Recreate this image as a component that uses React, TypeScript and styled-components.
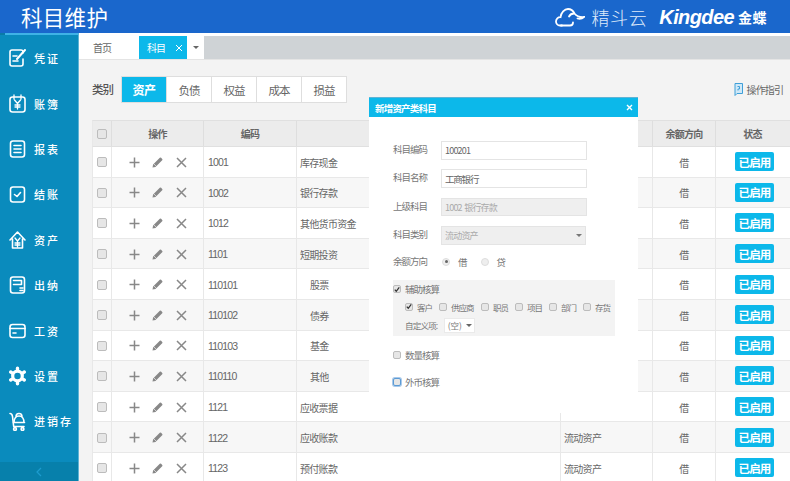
import React from "react";
import styled, { createGlobalStyle } from "styled-components";

const Global = createGlobalStyle`
  html, body { margin: 0; padding: 0; background: #fff; }
  * { box-sizing: border-box; }
  body { font-family: "Noto Sans CJK SC", "Liberation Sans", sans-serif; }
`;
const Page = styled.div`
  position: relative; width: 790px; height: 481px; overflow: hidden;
  display: flex; flex-direction: column;
`;
const Header = styled.header`
  height: 33px; flex: none; background: #1a67cc; color: #fff;
  display: flex; align-items: center; padding: 0 23px 0 21px;
`;
const Title = styled.h1`margin: 0; font-size: 21.5px; font-weight: 400; line-height: 33px; flex: 1; letter-spacing: .3px;`;
const Brand = styled.div`display: flex; align-items: center;`;
const BrandCn = styled.span`font-size: 18px; font-weight: 300; letter-spacing: .6px; margin: 0 12px 0 6px; line-height: 1; color: #dfeafa;`;
const BrandEn = styled.span`font-family: "Liberation Sans", sans-serif; font-size: 20px; font-weight: 700; font-style: italic; line-height: 1; letter-spacing: -.6px;`;
const BrandGold = styled.span`font-size: 14px; font-weight: 700; margin-left: 4px; line-height: 1; letter-spacing: .5px;`;
const Body = styled.div`flex: 1; display: flex; min-height: 0;`;
const Sidebar = styled.nav`
  width: 79px; flex: none; background: #0a8bbd; border-right: 1px solid #5fb3d4;
  display: flex; flex-direction: column; position: relative;
  border-top: 2px solid #3fb2e6;
  &::before { content: ""; position: absolute; left: 0; top: -2px; width: 5px; height: 2px; background: #0a7aa8; }
`;
const NavList = styled.div`flex: 1; display: flex; flex-direction: column; padding-top: 0.5px;`;
const NavItem = styled.div`
  height: 45.4px; flex: none; display: flex; align-items: center; padding-left: 9px; gap: 8px;
  color: #fff; font-size: 11px; letter-spacing: 2px; font-weight: 500; white-space: nowrap;
  svg { width: 17px; height: 20px; flex: none; }
`;
const Collapse = styled.div`
  height: 19px; flex: none; background: #0780ab; color: #1d9ccf; display: flex; align-items: center; justify-content: center;
`;
const Main = styled.main`flex: 1; min-width: 0; background: #f3f3f3; display: flex; flex-direction: column; border-top: 3px solid #fff; overflow: hidden;`;
const TabBar = styled.div`height: 24px; flex: none; background: #cfd3d6; display: flex; border-bottom: 1px solid #e4e4e4;`;
const Tab = styled.div<{ $active?: boolean; $w: number }>`
  width: ${p => p.$w}px; display: flex; align-items: center; font-size: 10px; letter-spacing: -.9px; gap: 10px;
  padding-left: ${p => (p.$active ? 8 : 14)}px;
  background: ${p => (p.$active ? "#0cb8ea" : "#fff")}; color: ${p => (p.$active ? "#fff" : "#666")};
`;
const CaretTab = styled.div`width: 17px; background: #fff; display: flex; align-items: center; justify-content: center;`;
const Caret = styled.span<{ $c?: string }>`
  width: 0; height: 0; border-left: 3px solid transparent; border-right: 3px solid transparent;
  border-top: 3px solid ${p => p.$c || "#666"};
`;
const Toolbar = styled.div`height: 60px; flex: none; display: flex; align-items: flex-start; padding: 16px 7px 0 13px;`;
const CatLabel = styled.span`font-size: 11.5px; letter-spacing: -.9px; font-weight: 500; color: #555; line-height: 26px; width: 29px; white-space: nowrap;`;
const Seg = styled.div`display: flex; height: 27px; border: 1px solid #dedede; background: #fff;`;
const SegBtn = styled.div<{ $active?: boolean }>`
  width: 45px; display: flex; align-items: center; justify-content: center;
  font-size: ${p => (p.$active ? 12 : 11.5)}px; letter-spacing: ${p => (p.$active ? -.5 : -1)}px;
  background: ${p => (p.$active ? "#0cb8ea" : "#fff")}; color: ${p => (p.$active ? "#fff" : "#666")};
  font-weight: ${p => (p.$active ? 600 : 400)};
  border-right: 1px solid #dedede;
  &:last-child { border-right: none; width: 44px; }
`;
const Guide = styled.div`margin-left: auto; margin-top: 7px; display: flex; align-items: center; gap: 4px; font-size: 10px; letter-spacing: -.9px; color: #666; line-height: 13px;`;
const Table = styled.div`margin-left: 13px; display: flex; flex-direction: column; width: 720px;`;
const cols = "19px 92px 93px 264px 92px 63px 97px";
const HeadRow = styled.div`
  display: grid; grid-template-columns: ${cols}; height: 27px; background: #ececec;
  border-top: 1px solid #e0e0e0; border-bottom: 1px solid #e0e0e0; border-left: 1px solid #e8e8e8;
`;
const HeadCell = styled.div`
  display: flex; align-items: center; justify-content: center; font-size: 10px; letter-spacing: -.8px; font-weight: 600; color: #666;
  border-right: 1px solid #dedede;
  &:nth-child(7) { padding-right: 24px; border-right: none; }
`;
const Row = styled.div<{ $odd: boolean }>`
  display: grid; grid-template-columns: ${cols}; height: 30.6px; flex: none;
  background: ${p => (p.$odd ? "#fff" : "#f7f7f7")};
  border-bottom: 1.5px solid #e8e8e8; border-left: 1px solid #e8e8e8;
`;
const Cell = styled.div<{ $center?: boolean; $indent?: boolean }>`
  display: flex; align-items: center; border-right: 1px solid #e8e8e8; color: #666; font-size: 10px; letter-spacing: -.7px; white-space: nowrap;
  justify-content: ${p => (p.$center ? "center" : "flex-start")};
  padding-left: ${p => (p.$center ? 0 : p.$indent ? 13 : 3)}px;
  padding-top: 1px;
`;
const CodeCell = styled(Cell)`font-family: "Liberation Sans", sans-serif; font-size: 10.5px; letter-spacing: -.85px; padding-left: 4px;`;
const OpCell = styled(Cell)`gap: 12.5px; color: #888;`;
const LastCell = styled(Cell)`border-right: none; justify-content: flex-start; padding-left: 19px; padding-top: 0; letter-spacing: 0;`;
const Status = styled.span`
  width: 39px; height: 19px; background: #0cb8ea; color: #fff; border-radius: 2px; font-size: 11.5px; font-weight: 700;
  display: flex; align-items: center; justify-content: center; letter-spacing: -.9px;
`;
const Check = styled.span<{ $size?: number; $focus?: boolean }>`
  width: ${p => p.$size || 10}px; height: ${p => p.$size || 10}px; flex: none; display: inline-flex; align-items: center; justify-content: center;
  background: #e6e6e6; border: 1px solid ${p => (p.$focus ? "#5b9bd5" : "#bcbcbc")}; border-radius: 2px;
  ${p => (p.$focus ? "box-shadow: 0 0 0 1px #a9c9ea;" : "")}
`;
const Dialog = styled.div`
  position: absolute; left: 369px; top: 97px; width: 269px; height: 316px; background: #fff; display: flex; flex-direction: column;
`;
const DlgTitle = styled.div`
  height: 20px; flex: none; background: #0cb8ea; border-top: 1px solid #5fb3d4; color: #fff; font-size: 9.5px; letter-spacing: -.8px; font-weight: 700;
  display: flex; align-items: center; justify-content: space-between; padding: 0 5px 0 6px;
`;
const DlgBody = styled.div`padding: 24px 22px 0 24px; display: flex; flex-direction: column;`;
const Field = styled.div`height: 28.4px; flex: none; display: flex; align-items: flex-start; font-size: 9.5px; letter-spacing: -1px; color: #777;`;
const FieldLabel = styled.span`width: 48px; flex: none; line-height: 17px;`;
const Input = styled.div<{ $off?: boolean; $w?: number; $big?: boolean }>`
  width: ${p => p.$w || 146}px; height: 18.5px; border: 1px solid #e4e4e4; display: flex; align-items: center; padding: 0 3px;
  background: ${p => (p.$off ? "#efefef" : "#fff")}; color: ${p => (p.$off ? "#aaa" : "#666")};
  font-size: ${p => (p.$big ? 9.5 : 9)}px; letter-spacing: ${p => (p.$big ? -1.2 : -.8)}px; justify-content: space-between; white-space: nowrap;
`;
const RadioRow = styled.div`height: 18px; margin-top: -2px; display: flex; align-items: center; font-size: 9.5px; letter-spacing: -1px; color: #777;`;
const Radio = styled.span<{ $on?: boolean }>`
  width: 8px; height: 8px; flex: none; border-radius: 50%; background: #eee; border: 1px solid #ddd; margin: 0 8px 0 1px; display: inline-flex; align-items: center; justify-content: center;
  &::after { content: ""; width: 3px; height: 3px; border-radius: 50%; background: ${p => (p.$on ? "#666" : "transparent")}; }
`;
const RadioText = styled.span`margin-right: 12px; font-size: 9.5px; letter-spacing: 0;`;
const AuxBox = styled.div`background: #f3f3f3; height: 56px; margin-top: 9px; padding-top: 3px; display: flex; flex-direction: column; width: 222px;`;
const CheckLine = styled.label`display: flex; align-items: center; gap: 4px; font-size: 9.5px; letter-spacing: -1px; color: #777; height: 13px; white-space: nowrap;`;
const SubLine = styled.div`display: flex; align-items: center; padding-left: 12px; height: 17px; margin-top: 2.5px; font-size: 8.5px; letter-spacing: -1px; color: #777;`;
const SubItem = styled.label<{ $w: number }>`width: ${p => p.$w}px; flex: none; display: flex; align-items: center; gap: 4px; white-space: nowrap;`;
const CustomLine = styled.div`display: flex; align-items: center; padding-left: 12px; margin-top: 2px; font-size: 8.5px; letter-spacing: -.8px; color: #777; gap: 7px; height: 16px;`;
const MiniSelect = styled.div`width: 31px; height: 15px; background: #fff; border: 1px solid #eaeaea; display: flex; align-items: center; justify-content: center; gap: 4px; font-size: 8.5px; letter-spacing: 0;`;
const AloneLine = styled(CheckLine)<{ $mt: number }>`margin-top: ${p => p.$mt}px;`;

const Ico: React.FC<{ children: React.ReactNode }> = ({ children }) => (
  <svg viewBox="0 0 17 20" fill="none" stroke="#fff" strokeWidth="1.6" strokeLinecap="round" strokeLinejoin="round">{children}</svg>
);
const nav: [string, React.ReactNode][] = [
  ["凭证", <Ico><path d="M14 5V4a2 2 0 0 0-2-2H3a2 2 0 0 0-2 2v12a2 2 0 0 0 2 2h9a2 2 0 0 0 2-2v-5" /><path d="M4 8h4M4 13h5" /><path d="M8 11l8-9" strokeWidth="2" /></Ico>],
  ["账簿", <Ico><rect x="1" y="3" width="15" height="15" rx="2.5" /><path d="M5 1v4M12 1v4M5.5 6l3 3.5 3-3.5M8.5 9.5V15M6 11h5M6 13h5" strokeWidth="1.3" /></Ico>],
  ["报表", <Ico><rect x="1.5" y="2" width="14" height="16" rx="2.5" /><path d="M5 6.5h7M5 10h7M5 13.5h7" /></Ico>],
  ["结账", <Ico><rect x="1.5" y="3" width="14" height="15" rx="2.5" /><path d="M5.5 10.5l2.5 2 3.5-4" /></Ico>],
  ["资产", <Ico><path d="M1 10l7.5-8L16 10M3.5 9v9h10V9" /><path d="M6 8l2.5 3L11 8M8.5 11v6M6 13h5M6 15h5" strokeWidth="1.3" /></Ico>],
  ["出纳", <Ico><rect x="1.5" y="2" width="14" height="16" rx="2.5" /><path d="M4.5 5.5h8v4h-8M11 13h3M11 15.5h3" /></Ico>],
  ["工资", <Ico><rect x="1" y="3.5" width="15" height="13" rx="2.5" /><path d="M1 7.5h15M4 12h3" /></Ico>],
  ["设置", <Ico><circle cx="8.5" cy="10" r="4.8" strokeWidth="3.2" /><path d="M8.5 2.2v1M8.5 16.8v1M1.7 6l1 .6M14.3 13.4l1 .6M1.7 14l1-.6M14.3 6.6l1-.6" strokeWidth="3.4" /></Ico>],
  ["进销存", <Ico><path d="M1 2.5c2 0 2.2 1 2.5 3l1.2 10H15" /><path d="M5 11.500c0-3.500 1.700-6.500 5-6.500s5 3 5 6.500zM4.500 11.500h11M7 5.500c0-2 1.200-3 3-3s3 1 3 3" /><circle cx="6" cy="18" r="1.4" /><circle cx="13.5" cy="18" r="1.4" /></Ico>],
];
const rows: [string, string, boolean][] = [
  ["1001", "库存现金", false], ["1002", "银行存款", false], ["1012", "其他货币资金", false], ["1101", "短期投资", false],
  ["110101", "股票", true], ["110102", "债券", true], ["110103", "基金", true], ["110110", "其他", true],
  ["1121", "应收票据", false], ["1122", "应收账款", false], ["1123", "预付账款", false],
];
const Tick = () => (
  <svg width="7" height="7" viewBox="0 0 8 8"><path d="M1 4.2l2 2.2L7 1.2" fill="none" stroke="#333" strokeWidth="1.7" /></svg>
);
const Plus = () => <svg width="11" height="11" viewBox="0 0 11 11"><path d="M5.5 .5v10M.5 5.5h10" stroke="#888" strokeWidth="1.5" /></svg>;
const Pen = () => <svg width="11" height="11" viewBox="0 0 11 11"><path d="M.5 10.5l.6-3L7.8 .8a.9 .9 0 0 1 1.3 0l1.1 1.1a.9 .9 0 0 1 0 1.3L3.5 9.9z" fill="#888" /><path d="M1.6 6.6l2.8 2.8" stroke="#fff" strokeWidth=".6" /></svg>;
const Cross = () => <svg width="11" height="11" viewBox="0 0 11 11"><path d="M1 1l9 9M10 1l-9 9" stroke="#888" strokeWidth="1.5" /></svg>;

export default function App() {
  return (
    <Page>
      <Global />
      <Header>
        <Title>科目维护</Title>
        <Brand>
          <svg width="30" height="20" viewBox="0 0 30 20" fill="none" stroke="#fff" strokeWidth="1.8" strokeLinecap="round">
            <path d="M7 18.5H5C2.5 18.5 1 16.5 1 14.5c0-2.5 2-4.5 4.500-4.300C6 5.500 9.500 2 13 2c3 0 5 1.500 6.500 4.500 1.500 1.800 4 4 9.500 3.500-2 1.800-4.500 2-6.500 1.500" />
            <path d="M19 6.5c-2 0-4 1-5 3M6 18.5h9c2 0 3-1.500 3-3" />
          </svg>
          <BrandCn>精斗云</BrandCn>
          <BrandEn>Kingdee</BrandEn>
          <BrandGold>金蝶</BrandGold>
        </Brand>
      </Header>
      <Body>
        <Sidebar>
          <NavList>
            {nav.map(([t, i]) => <NavItem key={t}>{i}<span>{t}</span></NavItem>)}
          </NavList>
          <Collapse>
            <svg width="6" height="10" viewBox="0 0 6 10"><path d="M5 1L1 5l4 4" fill="none" stroke="currentColor" strokeWidth="1.2" /></svg>
          </Collapse>
        </Sidebar>
        <Main>
          <TabBar>
            <Tab $w={60}>首页</Tab>
            <Tab $w={48} $active>科目<svg width="8" height="8" viewBox="0 0 8 8"><path d="M1 1l6 6M7 1L1 7" stroke="#fff" strokeWidth="1" /></svg></Tab>
            <CaretTab><Caret /></CaretTab>
          </TabBar>
          <Toolbar>
            <CatLabel>类别</CatLabel>
            <Seg>
              <SegBtn $active>资产</SegBtn>
              <SegBtn>负债</SegBtn>
              <SegBtn>权益</SegBtn>
              <SegBtn>成本</SegBtn>
              <SegBtn>损益</SegBtn>
            </Seg>
            <Guide>
              <svg width="9" height="13" viewBox="0 0 9 13"><path d="M1 .5h7.5v10H3L1 12.5z" fill="#cfe8f7" stroke="#3f9fd8" /><path d="M3.5 3.5h2V6H4v1.500" fill="none" stroke="#3f9fd8" /></svg>
              操作指引
            </Guide>
          </Toolbar>
          <Table>
            <HeadRow>
              <HeadCell><Check /></HeadCell>
              <HeadCell>操作</HeadCell>
              <HeadCell>编码</HeadCell>
              <HeadCell />
              <HeadCell />
              <HeadCell>余额方向</HeadCell>
              <HeadCell>状态</HeadCell>
            </HeadRow>
            {rows.map(([code, name, sub], i) => (
              <Row key={code} $odd={i % 2 === 0}>
                <Cell $center><Check /></Cell>
                <OpCell $center><Plus /><Pen /><Cross /></OpCell>
                <CodeCell>{code}</CodeCell>
                <Cell $indent={sub}>{name}</Cell>
                <Cell>{i >= 9 ? "流动资产" : ""}</Cell>
                <Cell $center>借</Cell>
                <LastCell><Status>已启用</Status></LastCell>
              </Row>
            ))}
          </Table>
        </Main>
      </Body>
      <Dialog>
        <DlgTitle>
          新增资产类科目
          <svg width="7" height="7" viewBox="0 0 7 7"><path d="M1 1l5 5M6 1L1 6" stroke="#fff" strokeWidth="1.4" /></svg>
        </DlgTitle>
        <DlgBody>
          <Field><FieldLabel>科目编码</FieldLabel><Input>100201</Input></Field>
          <Field><FieldLabel>科目名称</FieldLabel><Input $big>工商银行</Input></Field>
          <Field><FieldLabel>上级科目</FieldLabel><Input $off>1002&nbsp; 银行存款</Input></Field>
          <Field><FieldLabel>科目类别</FieldLabel><Input $off $w={145}>流动资产<Caret $c="#777" /></Input></Field>
          <RadioRow>
            <FieldLabel>余额方向</FieldLabel>
            <Radio $on /><RadioText>借</RadioText>
            <Radio /><RadioText>贷</RadioText>
          </RadioRow>
          <AuxBox>
            <CheckLine><Check $size={8}><Tick /></Check>辅助核算</CheckLine>
            <SubLine>
              <SubItem $w={34}><Check $size={8}><Tick /></Check>客户</SubItem>
              <SubItem $w={42}><Check $size={8} />供应商</SubItem>
              <SubItem $w={34}><Check $size={8} />职员</SubItem>
              <SubItem $w={34}><Check $size={8} />项目</SubItem>
              <SubItem $w={34}><Check $size={8} />部门</SubItem>
              <SubItem $w={32}><Check $size={8} />存货</SubItem>
            </SubLine>
            <CustomLine>自定义项:<MiniSelect>(空)<Caret /></MiniSelect></CustomLine>
          </AuxBox>
          <AloneLine $mt={12.5}><Check $size={8} />数量核算</AloneLine>
          <AloneLine $mt={14}><Check $size={8} $focus />外币核算</AloneLine>
        </DlgBody>
      </Dialog>
    </Page>
  );
}
